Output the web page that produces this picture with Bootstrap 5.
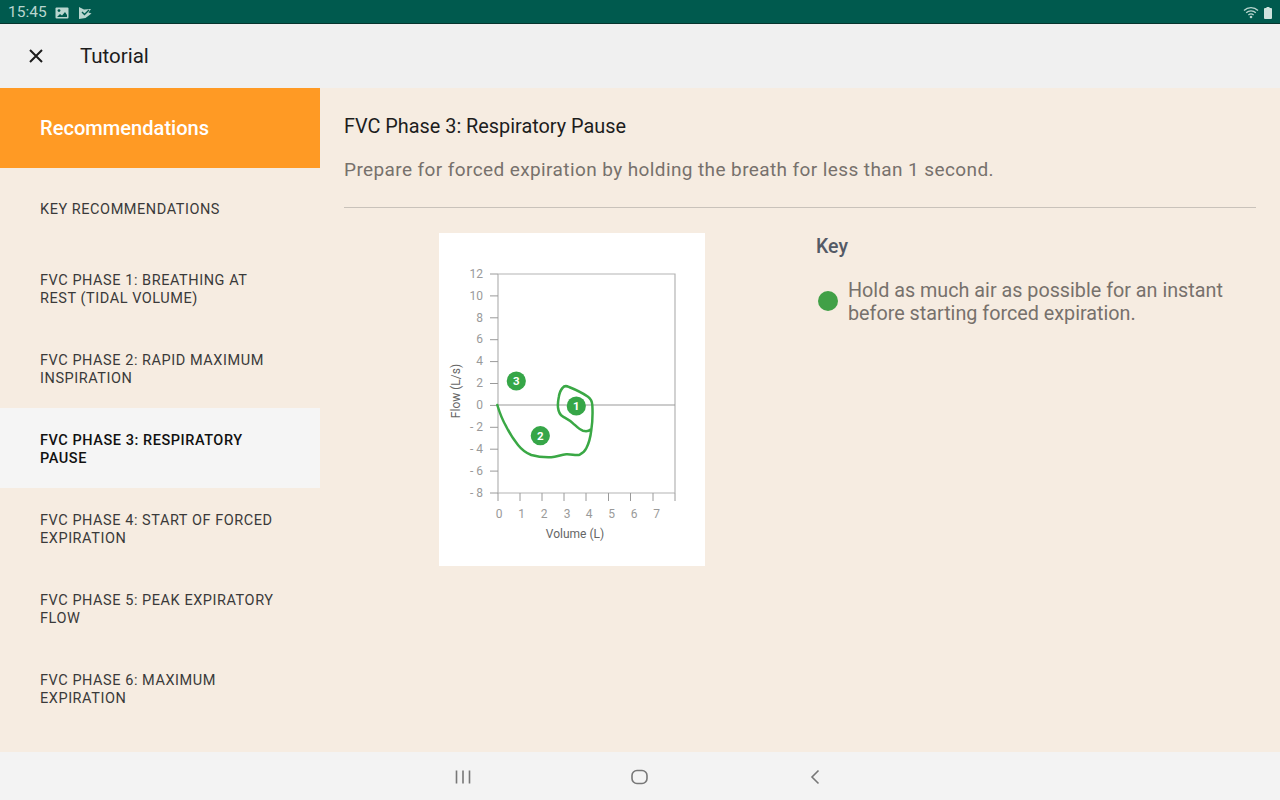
<!DOCTYPE html>
<html lang="en">
<head>
    <meta charset="UTF-8">
    <meta name="viewport" content="width=device-width, initial-scale=1.0">
    <title>Tutorial</title>
    <link rel="stylesheet" href="https://cdn.jsdelivr.net/npm/bootstrap@5.3.0/dist/css/bootstrap.min.css">
    <style>
        html, body { height: 800px; overflow: hidden; }
        body { font-family: Roboto, "Liberation Sans", sans-serif; background-color: #f6ece1; }
        .status-strip { height: 24px; background-color: #005a4e; color: #b9d6cf; font-size: 15.500px; border-bottom: 1px solid #06352e; padding: 2px 8px 0; }
        .status-flag { margin-left: 10px; }
        .top-strip { height: 64px; background-color: #f0f0f0; color: #1c1c1c; }
        .top-close { width: 80px; padding-left: 28px; line-height: 0; }
        .top-title { font-size: 20.500px; font-weight: 400; margin: 0; padding-top: 1px; }
        .main-area { height: 664px; }
        .side-col { width: 320px; flex-shrink: 0; }
        .side-head { height: 80px; background-color: #ff9a24; color: #fff; font-size: 20.100px; font-weight: 500; padding-left: 40px; }
        .side-item { height: 80px; padding: 3px 40px 0; font-size: 14.500px; line-height: 18px; text-transform: uppercase; color: #3a3a3a; letter-spacing: .55px; }
        .side-item.is-current { background-color: #f5f5f5; color: #111; font-weight: 500; }
        .content-col { padding: 0 24px; color: #77716c; }
        .phase-title { font-size: 19.850px; font-weight: 400; color: #1d1d1d; margin: 0; padding-top: 27px; line-height: 24px; }
        .phase-text { font-size: 19px; line-height: 24px; margin: 19px 0 0; letter-spacing: .4px; }
        .phase-rule { margin: 25px 0 24px; border-color: #c9c2ba; opacity: 1; }
        .chart-box { width: 266px; height: 333px; margin-left: 95px; margin-top: 1px; background-color: #fff; flex-shrink: 0; }
        .chart-box svg { display: block; }
        .chart-box text { font-family: Roboto, "Liberation Sans", sans-serif; font-size: 12px; fill: #9a9a9a; }
        .chart-box .axis-name { fill: #666; font-size: 12px; }
        .chart-box .dot-num { fill: #fff; font-size: 11.500px; font-weight: 700; }
        .key-col { margin-left: 111px; }
        .key-title { font-size: 19.500px; font-weight: 500; color: #545a66; margin: 3px 0 20px; line-height: 24px; }
        .key-dot { width: 20px; height: 20px; border-radius: 50%; background-color: #41a047; flex-shrink: 0; margin-top: 12px; margin-right: 10px; margin-left: 2px; }
        .key-text { font-size: 19.750px; line-height: 23px; margin: 0; width: 400px; }
        .nav-strip { height: 48px; background-color: #f3f3f3; color: #777; padding-top: 2px; }
        .nav-menu { margin-left: 455px; }
        .nav-home { margin-left: 160px; }
        .nav-back { margin-left: 162px; }
    </style>
</head>
<body>
    <div class="status-strip d-flex align-items-center">
        <span>15:45</span>
        <svg class="ms-2" width="14" height="12" viewBox="0 0 14 12"><rect x="0.500" y="0.500" width="13" height="11" rx="1" fill="#b9d6cf"/><circle cx="4" cy="3.600" r="1.400" fill="#005a4e"/><path d="M2 10l3-3 2 1.500L10 5l2 3v2z" fill="#005a4e"/></svg>
        <svg class="status-flag" width="13" height="12" viewBox="0 0 13 12"><path d="M0 0l5 2.500L12 2 9.500 5.500l3 1-6 4.500L0 12z" fill="#b9d6cf"/><path d="M3 5l2.500 2.500L10 3" fill="none" stroke="#005a4e" stroke-width="1.400"/></svg>
        <div class="ms-auto d-flex align-items-center gap-1">
            <svg width="17" height="13" viewBox="0 0 17 13"><path d="M1 4.500a10 10 0 0 1 14 0M3.200 6.800a7 7 0 0 1 9.600 0M5.400 9a4 4 0 0 1 5.200 0" fill="none" stroke="#b9d6cf" stroke-width="1.300"/><circle cx="8" cy="11" r="1.300" fill="#b9d6cf"/></svg>
            <svg width="8" height="12" viewBox="0 0 8 12"><path d="M2.500 0h3v1H7a1 1 0 0 1 1 1v9a1 1 0 0 1-1 1H1a1 1 0 0 1-1-1V2a1 1 0 0 1 1-1h1.500z" fill="#cfe3de"/></svg>
        </div>
    </div>
    <div class="top-strip d-flex align-items-center">
        <div class="top-close">
            <svg width="16" height="16" viewBox="0 0 16 16"><path d="M2 2l12 12M14 2L2 14" stroke="#1c1c1c" stroke-width="2" fill="none"/></svg>
        </div>
        <h1 class="top-title">Tutorial</h1>
    </div>
    <div class="main-area d-flex">
        <div class="side-col">
            <div class="side-head d-flex align-items-center">Recommendations</div>
            <div class="side-item d-flex align-items-center">Key Recommendations</div>
            <div class="side-item d-flex align-items-center">FVC Phase 1: Breathing at rest (tidal volume)</div>
            <div class="side-item d-flex align-items-center">FVC Phase 2: Rapid maximum inspiration</div>
            <div class="side-item is-current d-flex align-items-center">FVC Phase 3: Respiratory pause</div>
            <div class="side-item d-flex align-items-center">FVC Phase 4: Start of forced expiration</div>
            <div class="side-item d-flex align-items-center">FVC Phase 5: Peak expiratory flow</div>
            <div class="side-item d-flex align-items-center">FVC Phase 6: Maximum expiration</div>
        </div>
        <div class="content-col flex-grow-1">
            <h2 class="phase-title">FVC Phase 3: Respiratory Pause</h2>
            <p class="phase-text">Prepare for forced expiration by holding the breath for less than 1 second.</p>
            <hr class="phase-rule">
            <div class="d-flex">
                <div class="chart-box">
                    <svg width="266" height="333" viewBox="1 1 266 333">
                        <path d="M60 42H237V261M60 42V261H237" fill="none" stroke="#b4b4b4" stroke-width="1.200"/>
                        <path d="M60 173H237" stroke="#9a9a9a" stroke-width="1.200"/>
                        <path d="M52 42h8M52 63.900h8M52 85.800h8M52 107.700h8M52 129.600h8M52 151.500h8M52 173.400h8M52 195.300h8M52 217.200h8M52 239.100h8M52 261h8" stroke="#9a9a9a" stroke-width="1"/>
                        <path d="M60 261v8M82 261v8M104 261v8M126 261v8M148 261v8M170.500 261v8M192.500 261v8M215 261v8M237 261v8" stroke="#9a9a9a" stroke-width="1"/>
                        <g text-anchor="end">
                            <text x="45" y="46">12</text><text x="45" y="68">10</text><text x="45" y="90">8</text><text x="45" y="111">6</text><text x="45" y="133">4</text><text x="45" y="155">2</text><text x="45" y="177">0</text><text x="45" y="199">- 2</text><text x="45" y="221">- 4</text><text x="45" y="243">- 6</text><text x="45" y="265">- 8</text>
                        </g>
                        <g text-anchor="middle">
                            <text x="61" y="286">0</text><text x="83.500" y="286">1</text><text x="106" y="286">2</text><text x="129" y="286">3</text><text x="151" y="286">4</text><text x="173.500" y="286">5</text><text x="196" y="286">6</text><text x="218.500" y="286">7</text>
                            <text class="axis-name" x="137" y="306">Volume (L)</text>
                            <text class="axis-name" transform="translate(22 159) rotate(-90)">Flow (L/s)</text>
                        </g>
                        <path d="M59.300 173C62 182 65 189 68.300 194.700C72 202 76 208 80 213C84 218 88 221 93.300 223C100 225 106 225.600 113.300 225.300C119 225 123 222.500 128.300 222.300C134 222 138 224 141.700 222.700C145 221 147 219 148.300 216.300C151 211 152.500 205 153.300 198C154.500 190 154.800 181 154.300 173C154 169 152.500 166.500 150 164.700C143 160 136 157 131 155C128 153.500 126 154 124.500 156C122.500 158 121.500 161 120.800 165C120 169 119.600 172 120 175.500C120.500 180 122 183 125 184.700C129 187 132 188.500 135 191.300C138 194 141 197.500 145 198.700C148 199.500 151 199 152.700 197.300" fill="none" stroke="#3aa845" stroke-width="2.500" stroke-linecap="round"/>
                        <circle cx="138.300" cy="174" r="9.600" fill="#36a648"/><text class="dot-num" x="138.300" y="178" text-anchor="middle">1</text>
                        <circle cx="102.300" cy="203.700" r="9.600" fill="#36a648"/><text class="dot-num" x="102.300" y="207.700" text-anchor="middle">2</text>
                        <circle cx="78.300" cy="149" r="9.600" fill="#36a648"/><text class="dot-num" x="78.300" y="153" text-anchor="middle">3</text>
                    </svg>
                </div>
                <div class="key-col">
                    <h3 class="key-title">Key</h3>
                    <div class="d-flex">
                        <span class="key-dot"></span>
                        <p class="key-text">Hold as much air as possible for an instant before starting forced expiration.</p>
                    </div>
                </div>
            </div>
        </div>
    </div>
    <div class="nav-strip d-flex align-items-center">
        <svg class="nav-menu" width="16" height="16" viewBox="0 0 16 16"><path d="M1.500 1.500v13M8 1.500v13M14.500 1.500v13" stroke="#777" stroke-width="1.600" fill="none"/></svg>
        <svg class="nav-home" width="17" height="16" viewBox="0 0 17 16"><rect x="1" y="1.500" width="15" height="13" rx="5" fill="none" stroke="#777" stroke-width="1.600"/></svg>
        <svg class="nav-back" width="10" height="16" viewBox="0 0 10 16"><path d="M8.500 1.500L2 8l6.500 6.500" fill="none" stroke="#777" stroke-width="1.600"/></svg>
    </div>
    <script src="https://cdn.jsdelivr.net/npm/bootstrap@5.3.0/dist/js/bootstrap.bundle.min.js"></script>
</body>
</html>
